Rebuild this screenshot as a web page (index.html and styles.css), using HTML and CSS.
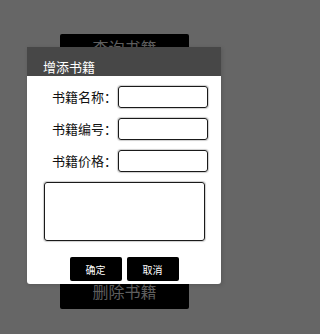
FILE: index.html
```html
<!DOCTYPE html>
<html lang="zh">
<head>
<meta charset="utf-8">
<link rel="stylesheet" href="styles.css">
</head>
<body>
<div class="screen">
  <div class="menu">
    <div class="bg-btn bg-btn-top">查询书籍</div>
    <div class="bg-btn">删除书籍</div>
  </div>
  <div class="dialog">
    <div class="dialog-title">增添书籍</div>
    <div class="dialog-body">
      <div class="row"><span class="label">书籍名称：</span><div class="field"></div></div>
      <div class="row"><span class="label">书籍编号：</span><div class="field"></div></div>
      <div class="row"><span class="label">书籍价格：</span><div class="field"></div></div>
      <div class="area"></div>
      <div class="actions">
        <div class="btn">确定</div>
        <div class="btn">取消</div>
      </div>
    </div>
  </div>
</div>
</body>
</html>
```
FILE: styles.css
```css
html, body {
  margin: 0;
  padding: 0;
}
body {
  width: 249px;
  height: 334px;
  background: #666666;
  font-family: "Noto Sans CJK SC", "Noto Sans", sans-serif;
  overflow: hidden;
}
.screen {
  position: relative;
  width: 249px;
  height: 334px;
}
.menu {
  display: flex;
  flex-direction: column;
  align-items: flex-start;
  padding: 34px 0 0 60px;
  gap: 203px;
}
.bg-btn {
  width: 129px;
  height: 36px;
  background: #000;
  border-radius: 2px;
  color: #5e5e5e;
  font-size: 16px;
  display: flex;
  align-items: center;
  justify-content: center;
  line-height: 20px;
}
.bg-btn-top {
  align-items: flex-start;
  padding-top: 3px;
  height: 33px;
}
.dialog {
  position: absolute;
  left: 27px;
  top: 47px;
  width: 194px;
  display: flex;
  flex-direction: column;
  box-shadow: 1px 1px 4px rgba(0, 0, 0, 0.15);
}
.dialog-title {
  background: #474747;
  color: #fff;
  font-size: 13px;
  line-height: 16px;
  padding: 12px 16px 1px;
}
.dialog-body {
  background: #fff;
  border-radius: 0 0 3px 3px;
  padding: 10px 0 3px;
  display: flex;
  flex-direction: column;
}
.row {
  display: flex;
  justify-content: flex-end;
  align-items: center;
  padding-right: 13px;
  margin-bottom: 10px;
}
.label {
  font-size: 13px;
  color: #111;
  line-height: 22px;
  margin-right: 1px;
}
.field {
  width: 88px;
  height: 20px;
  border: 1px solid #1a1a1a;
  border-radius: 3px;
  box-shadow: 0 0 1px 1px #cfcfcf;
}
.area {
  margin: 0 16px 16px 17px;
  height: 57px;
  border: 1px solid #1a1a1a;
  border-radius: 3px;
  box-shadow: 0 0 1px 1px #cfcfcf;
}
.actions {
  display: flex;
  justify-content: center;
  gap: 5px;
}
.btn {
  width: 52px;
  height: 24px;
  background: #000;
  border-radius: 2px;
  color: #fff;
  font-size: 10px;
  display: flex;
  align-items: center;
  justify-content: center;
}
```
